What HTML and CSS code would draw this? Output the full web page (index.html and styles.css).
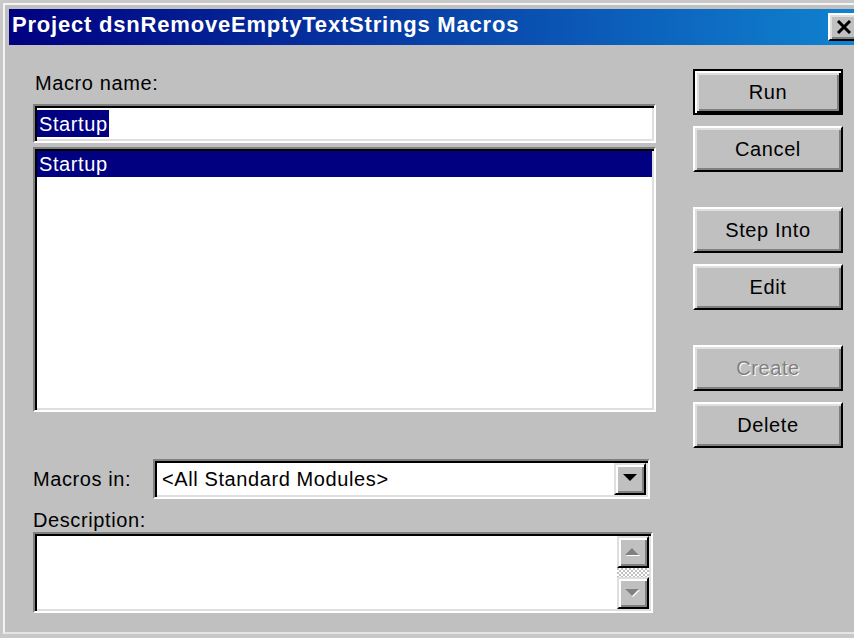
FILE: index.html
```html
<!DOCTYPE html>
<html lang="en">
<head>
<meta charset="utf-8">
<title>Project dsnRemoveEmptyTextStrings Macros</title>
<link rel="stylesheet" href="styles.css">
</head>
<body>
<div class="window">
  <div class="titlebar">
    <span class="title">Project dsnRemoveEmptyTextStrings Macros</span>
    <button class="close" type="button" aria-label="Close">
      <svg width="16" height="14" viewBox="0 0 16 14"><path d="M2 1 L14 13 M14 1 L2 13" stroke="#000" stroke-width="3" fill="none"/></svg>
    </button>
  </div>
  <div class="content">
    <div class="left">
      <div class="label label-name">Macro name:</div>
      <div class="field name-field"><span class="selected-text">Startup</span></div>
      <div class="field listbox">
        <div class="list-item is-selected">Startup</div>
      </div>
      <div class="macros-row">
        <span class="label macros-label">Macros in:</span>
        <div class="field combo">
          <span class="combo-value">&lt;All Standard Modules&gt;</span>
          <span class="raised combo-button">
            <svg width="14" height="8" viewBox="0 0 14 8"><polygon points="0,0 14,0 7,7" fill="#000"/></svg>
          </span>
        </div>
      </div>
      <div class="label label-desc">Description:</div>
      <div class="field description">
        <div class="scrollbar">
          <span class="raised sb-btn">
            <svg width="16" height="10" viewBox="0 0 16 10"><polygon points="8,2 15,9 1,9" fill="#fff"/><polygon points="7,1 14,8 0,8" fill="#808080"/></svg>
          </span>
          <span class="sb-track"></span>
          <span class="raised sb-btn">
            <svg width="16" height="10" viewBox="0 0 16 10"><polygon points="1,2 15,2 8,9" fill="#fff"/><polygon points="0,1 14,1 7,8" fill="#808080"/></svg>
          </span>
        </div>
      </div>
    </div>
    <div class="right">
      <button class="btn btn-default btn-run" type="button">Run</button>
      <button class="btn btn-pair" type="button">Cancel</button>
      <button class="btn btn-group" type="button">Step Into</button>
      <button class="btn btn-pair" type="button">Edit</button>
      <button class="btn btn-group btn-disabled" type="button" disabled>Create</button>
      <button class="btn btn-pair" type="button">Delete</button>
    </div>
  </div>
</div>
</body>
</html>
```

FILE: styles.css
```css
* {
  box-sizing: border-box;
}

html,
body {
  margin: 0;
}

body {
  width: 854px;
  height: 638px;
  overflow: hidden;
  padding: 3px 0 0 3px;
  background: #c8c8c8;
  font-family: "Liberation Sans", Arial, sans-serif;
  font-size: 20px;
  letter-spacing: 0.6px;
  color: #000;
}

/* dialog frame */
.window {
  width: 880px;
  height: 631px;
  padding: 4px 0 0 4px;
  background: #c0c0c0;
  border-top: 2px solid #f4f4f4;
  border-left: 2px solid #f4f4f4;
  border-bottom: 2px solid #e4e4e4;
}

.titlebar {
  width: 855px;
  height: 36px;
  display: flex;
  align-items: center;
  justify-content: space-between;
  padding: 0 4px 0 3px;
  background: linear-gradient(to right, #000080, #1084d0);
}

.title {
  align-self: flex-start;
  padding-top: 4px;
  line-height: 24px;
  color: #fff;
  font-weight: bold;
  font-size: 22px;
  letter-spacing: 0.8px;
  white-space: nowrap;
}

.close {
  width: 32px;
  height: 28px;
  padding: 0;
  display: flex;
  align-items: center;
  justify-content: center;
  background: #c0c0c0;
  border: 2px solid;
  border-color: #fff #000 #000 #fff;
  box-shadow: inset 2px 2px #dfdfdf, inset -2px -2px #808080;
}

.content {
  display: flex;
  padding-left: 24px;
}

.left {
  width: 623px;
  display: flex;
  flex-direction: column;
  align-items: flex-start;
}

.label {
  height: 22px;
  line-height: 22px;
  white-space: nowrap;
}

.label-name {
  margin-top: 27px;
  padding-left: 2px;
}

/* sunken white fields */
.field {
  padding: 2px;
  background: #fff;
  border: 2px solid;
  border-color: #808080 #fff #fff #808080;
  box-shadow: inset 2px 2px #000, inset -2px -2px #dfdfdf;
}

.name-field {
  width: 623px;
  height: 39px;
  margin-top: 10px;
  padding: 4px 2px;
  display: flex;
  align-items: flex-start;
}

.selected-text {
  height: 27px;
  line-height: 29px;
  overflow: hidden;
  padding: 0 1px 0 2px;
  background: #000080;
  color: #fff;
}

.listbox {
  width: 623px;
  height: 265px;
  margin-top: 4px;
}

.list-item {
  height: 26px;
  line-height: 26px;
  padding-left: 2px;
}

.is-selected {
  background: #000080;
  color: #fff;
}

.macros-row {
  display: flex;
  align-items: center;
  margin-top: 47px;
}

.macros-label {
  width: 120px;
  height: 40px;
  line-height: 40px;
}

.combo {
  width: 497px;
  height: 40px;
  display: flex;
}

.combo-value {
  flex: 1;
  line-height: 32px;
  padding-left: 5px;
  white-space: nowrap;
}

/* raised grey control faces (combo arrow, scroll arrows) */
.raised {
  display: flex;
  align-items: center;
  justify-content: center;
  background: #c0c0c0;
  border: 2px solid;
  border-color: #dfdfdf #000 #000 #dfdfdf;
  box-shadow: inset 2px 2px #fff, inset -2px -2px #808080;
}

.combo-button {
  width: 32px;
  padding-bottom: 2px;
}

.label-desc {
  margin-top: 10px;
}

.description {
  width: 620px;
  height: 81px;
  margin-top: 1px;
  display: flex;
  justify-content: flex-end;
}

.scrollbar {
  width: 32px;
  display: flex;
  flex-direction: column;
}

.sb-btn {
  height: 32px;
}

.sb-track {
  flex: 1;
  background: repeating-conic-gradient(#fff 0 25%, #c0c0c0 0 50%) 0 0 / 4px 4px;
}

/* command buttons */
.right {
  width: 150px;
  margin-left: 37px;
  display: flex;
  flex-direction: column;
}

.btn {
  width: 150px;
  height: 46px;
  padding: 0;
  font: inherit;
  letter-spacing: inherit;
  color: #000;
  background: #c0c0c0;
  border: 2px solid;
  border-color: #fff #000 #000 #fff;
  box-shadow: inset 2px 2px #dfdfdf, inset -2px -2px #808080;
}

.btn-default {
  border-color: #000;
  box-shadow: inset 2px 2px #fff, inset -2px -2px #000,
    inset 4px 4px #dfdfdf, inset -4px -4px #808080;
}

.btn-run {
  margin-top: 24px;
}

.btn-pair {
  margin-top: 11px;
}

.btn-group {
  margin-top: 35px;
}

.btn-disabled {
  color: #808080;
  text-shadow: 1px 1px 0 #fff;
}
```
